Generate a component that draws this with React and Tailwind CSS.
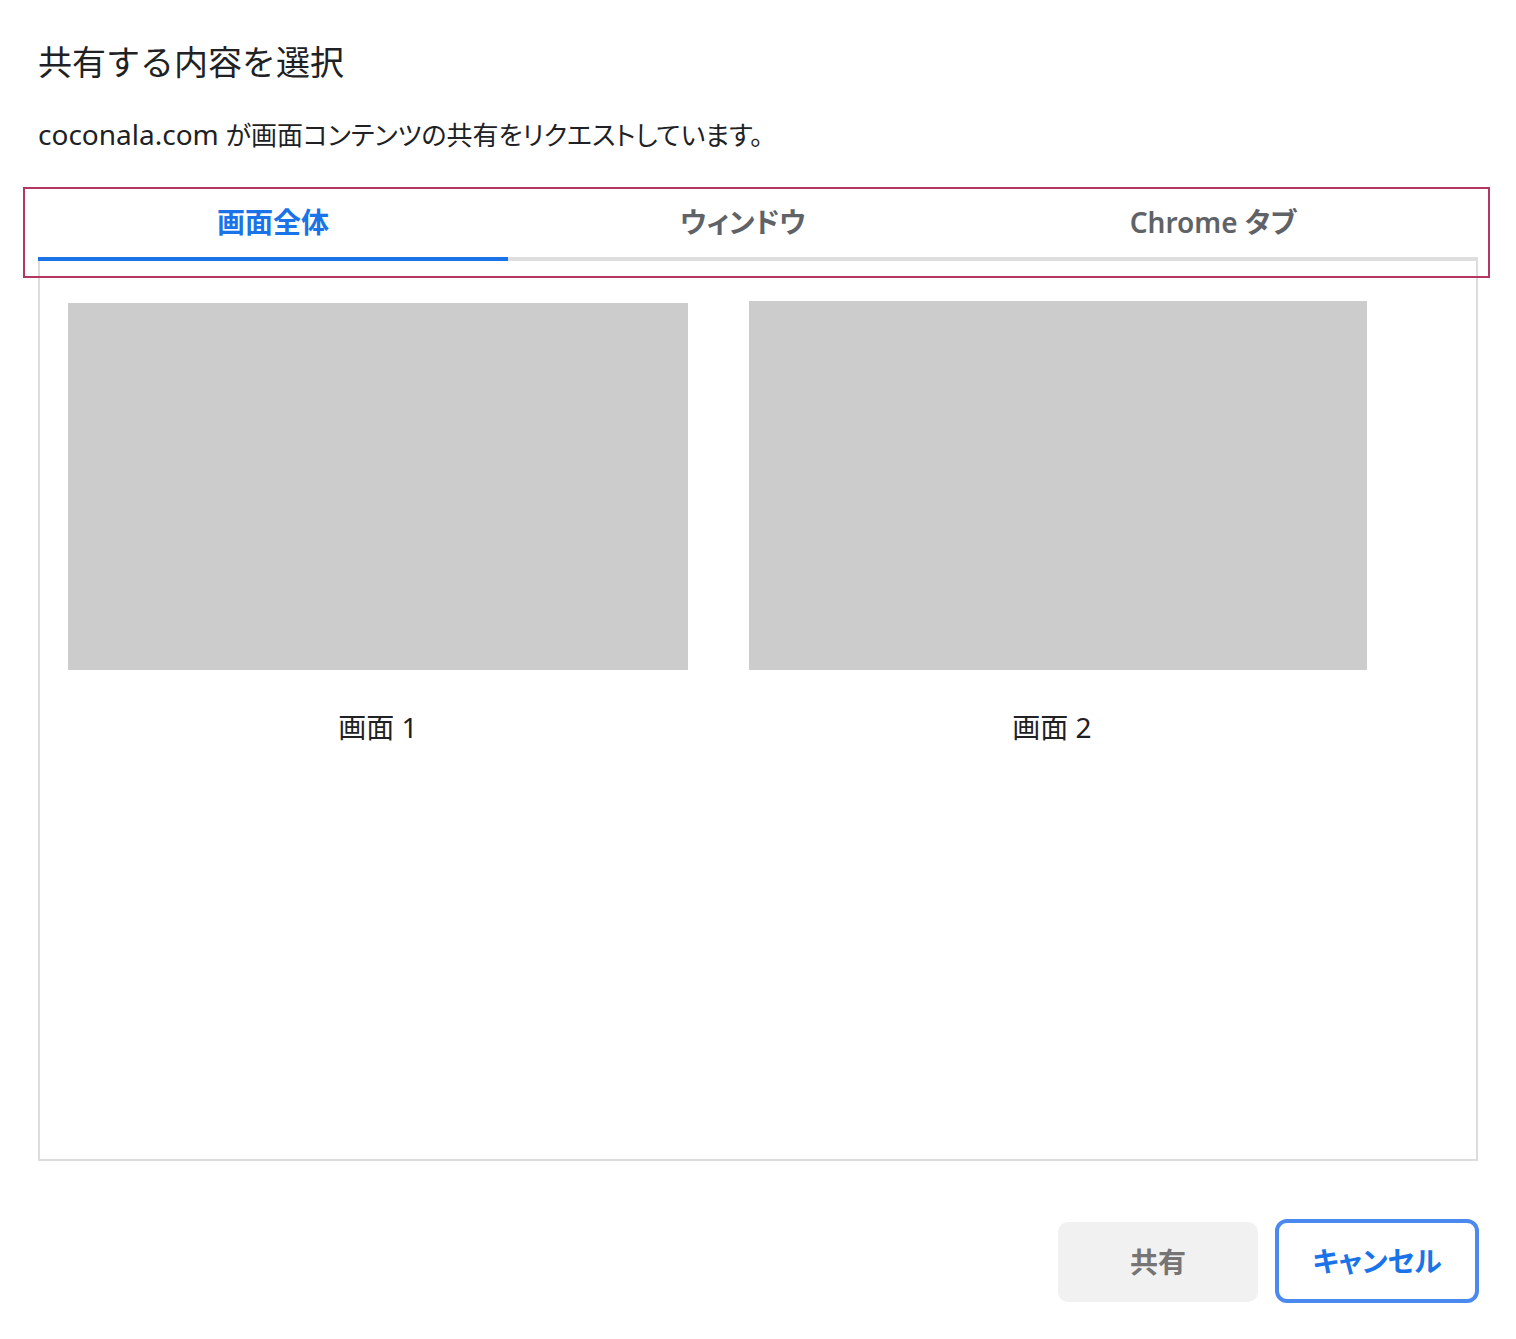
import { useState } from 'react'

const font = { fontFamily: '"Noto Sans", "Noto Sans CJK JP", sans-serif' }

export default function App() {
  const [tab, setTab] = useState('screen')

  const tabs = [
    { key: 'screen', label: '画面全体' },
    { key: 'window', label: 'ウィンドウ' },
    { key: 'chrome', label: 'Chrome タブ' },
  ]

  return (
    <div className="w-[1516px] h-[1339px] bg-white text-[#202124] flex flex-col" style={font}>
      <div className="px-[38px] pt-[38px]">
        <h1 className="text-[34px] leading-[48px] font-normal">共有する内容を選択</h1>
        <p className="mt-[30px] text-[26px] leading-[36px] [font-feature-settings:'palt']">
          <span className="text-[28px]">coconala.com</span> が画面コンテンツの共有をリクエストしています。
        </p>
      </div>

      {/* tabs + annotation box */}
      <div className="relative mt-[32px] mx-[38px]">
        <div className="absolute -left-[15px] -right-[12px] top-[2px] h-[91px] border-2 border-[#b3375f] pointer-events-none z-10" />
        <nav className="flex border-b-4 border-[#dedede] pt-[17px]">
          {tabs.map(({ key, label }) => (
            <button
              key={key}
              onClick={() => setTab(key)}
              className={`w-[470px] h-[59px] -mb-[4px] border-b-4 text-[28px] leading-[36px] font-semibold pb-[16px] [font-feature-settings:'palt'] ${
                tab === key ? 'border-[#1a73e8] text-[#1a73e8]' : 'border-transparent text-[#5f6368]'
              }`}
            >
              {label}
            </button>
          ))}
        </nav>

        <div className="h-[900px] border-2 border-t-0 border-[#dcdcdc] px-[28px] pt-[42px]">
          <div className="grid grid-cols-[620px_618px] gap-x-[61px]">
            {['画面 1', '画面 2'].map((name, i) => (
              <div key={name} className="flex flex-col items-center">
                <div className={`w-full bg-[#cccccc] ${i === 0 ? 'h-[367px]' : 'h-[369px] -mt-[2px]'}`} />
                <div className={`mt-[38px] text-[28px] leading-[38px] text-[#202124] ${i === 1 ? '-ml-[12px]' : ''}`}>{name}</div>
              </div>
            ))}
          </div>
        </div>
      </div>

      <div className="flex justify-end gap-[17px] pr-[37px] mt-[58px]">
        <button className="w-[200px] h-[80px] mt-[3px] rounded-[10px] bg-[#f1f1f1] text-[#757575] text-[28px] font-semibold [font-feature-settings:'palt']">
          共有
        </button>
        <button className="w-[204px] h-[84px] rounded-[12px] border-4 border-[#4a89ee] text-[#1a73e8] text-[28px] font-semibold [font-feature-settings:'palt']">
          キャンセル
        </button>
      </div>
    </div>
  )
}
